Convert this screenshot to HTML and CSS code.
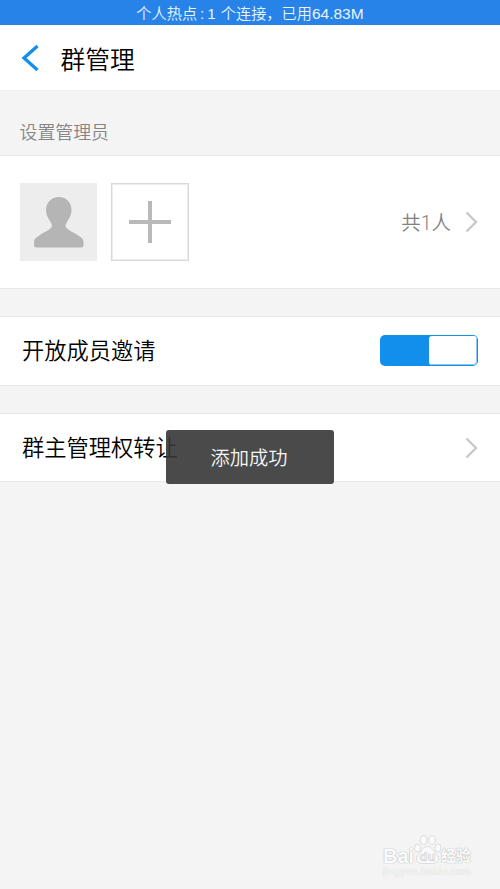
FILE: index.html
```html
<!DOCTYPE html>
<html lang="zh-CN">
<head>
<meta charset="utf-8">
<title>群管理</title>
<link rel="stylesheet" href="styles.css">
</head>
<body>
<div class="status"><span>个人热点</span><span class="colon">:</span><span class="count">1</span><span class="link">个连接，</span><span>已用</span><span class="data">64.83M</span></div>
<header class="header">
  <svg class="back" width="18" height="26" viewBox="0 0 18 26"><path d="M16.500 1L3 13l13.500 12" fill="none" stroke="#128eeb" stroke-width="3.300"/></svg>
  <h1 class="title">群管理</h1>
</header>
<h2 class="label">设置管理员</h2>
<section class="panel admins">
  <div class="avatar">
    <svg width="77" height="78" viewBox="0 0 77 78"><path d="M39 14c-8 0-13 6-13 13 0 8 6 12 6 16 0 3-6 5-12 9-4 2.500-6 4-6 7v3q0 2.500 2.500 2.500h44.500q2.500 0 2.500-2.500v-3c0-3-2-4.500-6-7-6-4-12-6-12-9 0-4 6-8 6-16 0-7-5-13-12.500-13z" fill="#b5b5b5"/></svg>
  </div>
  <div class="add">
    <svg width="42" height="42" viewBox="0 0 42 42"><path d="M21 0v42M0 21h42" stroke="#b9b9b9" stroke-width="4"/></svg>
  </div>
  <span class="people">共1人</span>
  <svg class="chevron" width="13" height="22" viewBox="0 0 13 22"><path d="M1.500 1.500L11 11l-9.500 9.500" fill="none" stroke="#c9c9c9" stroke-width="2.400"/></svg>
</section>
<section class="panel row">
  <span class="name">开放成员邀请</span>
  <div class="switch"><div class="knob"></div></div>
</section>
<section class="panel row transfer">
  <span class="name">群主管理权转让</span>
  <svg class="chevron" width="13" height="22" viewBox="0 0 13 22"><path d="M1.500 1.500L11 11l-9.500 9.500" fill="none" stroke="#c9c9c9" stroke-width="2.400"/></svg>
</section>
<div class="toast">添加成功</div>
<div class="watermark">
  <div class="brand">
    <span class="bai">Bai</span>
    <svg class="paw" width="28" height="32" viewBox="0 0 28 32"><g fill="#fafafa" stroke="#dcdcdc" stroke-width="1"><ellipse cx="3.500" cy="14" rx="3" ry="4"/><ellipse cx="9.500" cy="6" rx="3.300" ry="4.300"/><ellipse cx="18" cy="6" rx="3.300" ry="4.300"/><ellipse cx="24" cy="14" rx="3" ry="4"/><path d="M13.500 12.500c-5 0-6 5-9 8-4 4-2 9 4 9h10c6 0 8-5 4-9-3-3-4-8-9-8z"/></g><text class="du" x="13.500" y="27" text-anchor="middle">du</text></svg>
    <span class="exp">经验</span>
  </div>
  <div class="site">jingyan.baidu.com</div>
</div>
</body>
</html>
```
FILE: styles.css
```css
* { box-sizing: border-box; }
body {
  margin: 0;
  height: 889px;
  position: relative;
  overflow: hidden;
  background: #f4f4f4;
  color: #000;
  font-family: Roboto, "Noto Sans CJK SC", sans-serif;
  font-weight: 350;
}
svg { display: block; flex: none; }
.status {
  height: 25px;
  display: flex;
  justify-content: center;
  background: #2783e7;
  color: #eaf4ff;
  font-family: "Liberation Sans", "Noto Sans CJK SC", sans-serif;
  font-size: 15.200px;
  line-height: 28px;
  white-space: pre;
}
.colon { margin: 0 3px; }
.count { margin-right: 5px; }
.data { font-size: 15.500px; }
.header {
  height: 66px;
  display: flex;
  align-items: center;
  padding-left: 21px;
  background: #fff;
  border-bottom: 1px solid #f0f0f0;
}
.back { margin-left: -.5px; }
.title {
  margin: 6px 0 0 22px;
  font-size: 24.800px;
  font-weight: 350;
  line-height: 36px;
}
.label {
  margin: 0;
  height: 64px;
  padding: 28px 0 0 19.500px;
  color: #858585;
  font-size: 17.900px;
  font-weight: 350;
  line-height: 27px;
}
.panel {
  display: flex;
  align-items: center;
  background: #fff;
  border-top: 1px solid #e8e8e8;
  border-bottom: 1px solid #e8e8e8;
}
.admins { height: 134px; padding: 0 22px 0 20px; }
.avatar { width: 77px; height: 78px; background: #ededed; }
.add {
  width: 78px;
  height: 78px;
  margin-left: 14px;
  display: grid;
  place-items: center;
  border: 1px solid #d9d9d9;
  box-shadow: inset 0 0 0 1px #ececec;
}
.people { margin-left: auto; color: #808080; font-size: 19.500px; line-height: 28px; padding-top: 4px; }
.people + .chevron { margin-left: 14px; }
.row {
  height: 70px;
  margin-top: 27px;
  padding: 0 22px;
  justify-content: space-between;
}
.transfer { height: 69px; }
.name { font-size: 22.250px; line-height: 32px; }
.switch {
  width: 98px;
  height: 31px;
  margin-bottom: 2px;
  padding: 1px;
  display: flex;
  justify-content: flex-end;
  background: #128eeb;
  border-radius: 5px;
}
.knob { width: 48px; background: #fff; border-radius: 3px; box-shadow: inset -1px -1px 0 #8cc8f5; }
.toast {
  position: absolute;
  left: 166px;
  top: 430px;
  width: 168px;
  height: 54px;
  padding-right: 2px;
  border-radius: 3px;
  background: rgba(54, 54, 54, .9);
  color: #f5f5f5;
  font-size: 19.300px;
  line-height: 57px;
  text-align: center;
}
.watermark {
  position: absolute;
  left: 383px;
  top: 834px;
  width: 95px;
  color: #fcfcfc;
  font-weight: 700;
  text-shadow: 0 0 1px #bbb, 0 0 1px #bbb, 0 0 1px #ccc;
}
.brand { height: 32px; display: flex; align-items: flex-end; }
.bai { width: 31px; font-family: "Liberation Sans", sans-serif; font-size: 20px; line-height: 19px; }
.exp { font-size: 15px; line-height: 19px; margin-left: -1px; }
.du { font-family: "Liberation Sans", sans-serif; font-size: 13px; fill: #f4f4f4; stroke: #d0d0d0; stroke-width: .6px; text-shadow: none; }
.site { font-family: "Liberation Sans", sans-serif; font-size: 10.900px; line-height: 11px; font-weight: 400; color: #f4f4f4; text-shadow: 0 0 1px #d0d0d0; }
```
